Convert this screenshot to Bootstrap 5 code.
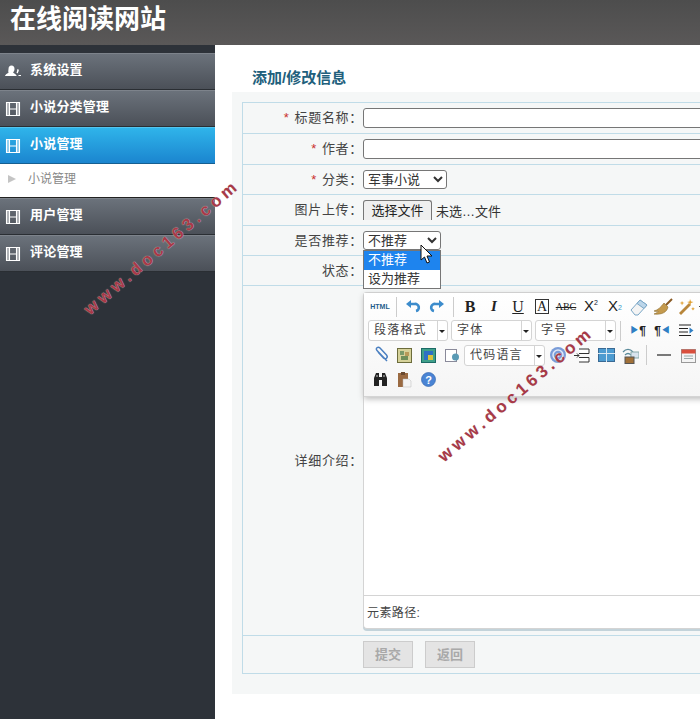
<!DOCTYPE html>
<html lang="zh">
<head>
<meta charset="utf-8">
<title>在线阅读网站</title>
<link href="https://cdn.jsdelivr.net/npm/bootstrap@5.3.0/dist/css/bootstrap.min.css" rel="stylesheet">
<style>
html,body{height:719px;overflow:hidden;background:#fff}
body{font-family:"Liberation Sans","Noto Sans CJK SC",sans-serif;font-size:13px;color:#444;width:700px;position:relative}
.top-bar{height:45px;background:linear-gradient(#4d4d4d,#5a5858);color:#fff;font-size:26px;font-weight:700;line-height:38px;padding-left:10px}
.shell{height:674px}
.side-col{width:215px;flex:none;background:#2d3239;padding-top:8px}
.menu-item{height:37px;background:linear-gradient(#6b727b,#4b5058);border-top:1px solid #7d838b;border-bottom:1px solid #2a2e33;color:#fff;font-weight:700;font-size:13px;letter-spacing:.2px;gap:9px;padding-left:5px}
.menu-item span{margin-bottom:3px}
.menu-item.on{background:linear-gradient(#2fb4ea,#1b85cf);border-top-color:#53c4ee;border-bottom-color:#155f91}
.menu-sub{height:34px;background:#fff;color:#888;font-size:12px;padding:0 0 3px 8px;gap:12px;border-bottom:1px solid #222}
.tri{width:0;height:0;border-left:8px solid #c4c4c4;border-top:4px solid transparent;border-bottom:4px solid transparent}
.main-col{flex:1;min-width:0;overflow:hidden;padding:25px 0 0 17px}
.page-title{color:#21607c;font-size:15px;font-weight:700;height:22px;line-height:16px;padding-left:20px}
.panel-box{background:#f5f7f7;height:602px;padding:10px 0 0 10px;width:520px}
.form-rows{border:1px solid #c0dce8;border-right:0;width:510px}
.form-row-x{border-bottom:1px solid #c0dce8}
.form-row-x:last-child{border-bottom:0}
.lab{width:120px;flex:none;text-align:right;font-size:13px;color:#444;letter-spacing:.7px}
.lab i{color:#c9302c;font-style:normal;margin-right:5px}
.h31{height:31px}.h30{height:30px}
.row-tall{height:350px}.row-btns{height:37px}
.txt{width:400px;height:20px;border:1px solid #767676;border-radius:3px;background:#fff;flex:none}
select.sel{font-size:13px;height:19px;border:1px solid #767676;border-radius:3px;background:#fff;color:#333;padding:0;font-family:inherit}
select.w84{width:84px}select.w78{width:78px}
.file-btn{height:20px;width:69px;padding:0;font-size:13px;border:1px solid #767676;border-bottom:0;border-radius:3px 3px 0 0;background:#efefef;color:#222;flex:none;margin-bottom:5px}
.file-txt{margin:4px 0 0 4px;color:#333;font-size:13px}
.edit-wrap{width:400px;height:337px;flex:none;background:#fff;border:1px solid #d4d4d4;border-right:0;border-radius:4px;box-shadow:0 2px 0 #c3d3da;margin-top:-1px}
.tool-box{height:104px;background:linear-gradient(#fff,#f5f5f5);border-bottom:1px solid #d4d4d4;box-shadow:0 2px 6px #bbb;padding:2px 0 0 4px}
.tool-row{height:24.3px;gap:0;white-space:nowrap}
.ti{width:24px;height:20px;display:inline-flex;align-items:center;justify-content:center;flex:none;font-family:"Liberation Serif",serif;color:#222;font-size:14px;font-weight:700}
.ti-html{font:700 7px "Liberation Sans",sans-serif;color:#1f5d8c}
.ti-b{font-size:16px}.ti-i{font-style:italic;font-size:15px}.ti-u{text-decoration:underline;font-weight:400;font-size:16px}
.ti-a{font-weight:400}.ti-a span{border:1px solid #333;padding:0 1px;line-height:13px;font-size:14px}
.ti-s{font-size:10px;text-decoration:line-through;font-weight:400;margin-right:1px}
.ti-x{font-family:"Liberation Sans",sans-serif;font-size:15px;font-weight:400}
.ti-x sup{font-size:7px;color:#123}.ti-x sub{font-size:7px;color:#39c}
.ti-p{font:700 12px "Liberation Sans",sans-serif;color:#222}.ti-p span{color:#2f7fc4;font-size:9px}
.vbar{width:1px;height:20px;background:#ccc;margin:0 4px;flex:none}
.vbar-b{margin:0 5px 0 2px}.vbar-c{margin:0 5px 0 4px}
.combo{height:21px;width:81px;border:1px solid #d4d4d4;border-radius:3px;background:#fff;font-size:12px;letter-spacing:1.2px;color:#444;padding-left:5px;margin-right:3px;position:relative;flex:none;line-height:19px}
.combo.w80{width:80px}.combo.mr2{margin-right:2px}.combo.mr1{margin-right:1px}
.combo::after{content:"";position:absolute;right:0;top:0;bottom:0;width:10px;border-left:1px solid #d4d4d4}
.combo::before{content:"";position:absolute;right:2px;top:9px;border-top:3px solid #222;border-left:3px solid transparent;border-right:3px solid transparent;z-index:1}
.edit-area{height:198px}
.path-bar{height:33px;border-top:1px solid #d4d4d4;font-size:12px;color:#444;padding:0 0 0 3px;line-height:35px;letter-spacing:.4px}
.grey-btn{width:50px;height:27px;border:1px solid #ccc;background:#e4e4e4;color:#a9a9a9;font-weight:700;font-size:13px;padding:0}
.btn-gap{margin-left:12px}
.drop-list{position:absolute;left:363px;top:250px;width:78px;background:#fff;border:1px solid #767676;font-size:13px;color:#333;line-height:18px;z-index:5}
.drop-opt{padding-left:4px;height:18.5px}
.drop-opt.hl{background:#1e84ee;color:#fff}
.cursor-svg{position:absolute;left:420px;top:244px;z-index:6}
.wm{position:absolute;z-index:9;color:#a83a48;font-weight:700;font-size:17px;letter-spacing:4px;white-space:nowrap;transform-origin:0 0;transform:rotate(-40.500deg);font-family:"Liberation Sans",sans-serif;text-shadow:0 0 1px #ddd;line-height:18px}
.wm1{left:81px;top:305px}
.wm2{left:435px;top:452px}
</style>
</head>
<body>
<div class="top-bar">在线阅读网站</div>
<div class="shell d-flex">
  <div class="side-col">
    <div class="menu-item d-flex align-items-center"><svg width="16" height="16" viewBox="0 0 16 16"><path fill="#fff" d="M6.500 1.500a3 3.500 0 0 1 3 3.500c0 1.600-.7 2.700-1.400 3.200 0 1 3 1.500 3.600 3.800H0c.6-2.300 3.600-2.800 3.600-3.800C2.900 7.700 3.500 6.600 3.500 5a3 3.500 0 0 1 3-3.500z"/><path fill="#fff" d="M12.500 5a1.400 1.600 0 0 1 .6 3c-.4.500.2.900.5 1.100l-1.500.2-.6-.5c.5-.9.600-2.500 1-3.800zM13.500 11H16v1h-2.500z"/></svg><span>系统设置</span></div>
    <div class="menu-item d-flex align-items-center"><svg width="16" height="16" viewBox="0 0 16 16"><use href="#film"/></svg><span>小说分类管理</span></div>
    <div class="menu-item on d-flex align-items-center"><svg width="16" height="16" viewBox="0 0 16 16"><use href="#film"/></svg><span>小说管理</span></div>
    <div class="menu-sub d-flex align-items-center"><span class="tri"></span><span>小说管理</span></div>
    <div class="menu-item d-flex align-items-center"><svg width="16" height="16" viewBox="0 0 16 16"><use href="#film"/></svg><span>用户管理</span></div>
    <div class="menu-item d-flex align-items-center"><svg width="16" height="16" viewBox="0 0 16 16"><use href="#film"/></svg><span>评论管理</span></div>
  </div>
  <div class="main-col">
    <div class="page-title">添加/修改信息</div>
    <div class="panel-box">
      <div class="form-rows">
        <div class="form-row-x h31 d-flex align-items-center"><div class="lab"><i>*</i>标题名称：</div><div class="txt"></div></div>
        <div class="form-row-x h31 d-flex align-items-center"><div class="lab"><i>*</i>作者：</div><div class="txt"></div></div>
        <div class="form-row-x h30 d-flex align-items-center"><div class="lab"><i>*</i>分类：</div><select class="sel w84"><option>军事小说</option></select></div>
        <div class="form-row-x h31 d-flex align-items-end"><div class="lab align-self-center">图片上传：</div><button class="file-btn" type="button">选择文件</button><span class="file-txt align-self-center">未选…文件</span></div>
        <div class="form-row-x h30 d-flex align-items-center"><div class="lab">是否推荐：</div><select class="sel w78"><option>不推荐</option></select></div>
        <div class="form-row-x h30 d-flex align-items-center"><div class="lab">状态：</div></div>
        <div class="form-row-x row-tall d-flex align-items-center"><div class="lab">详细介绍：</div>
          <div class="edit-wrap">
            <div class="tool-box">
              <div class="tool-row d-flex align-items-center">
                <span class="ti ti-html">HTML</span><span class="vbar"></span>
                <span class="ti"><svg width="16" height="16" viewBox="0 0 16 16"><path d="M5 5h4.500a3.500 3.500 0 0 1 1.500 7" fill="none" stroke="#3d8ccc" stroke-width="2.600"/><path d="M1 5l5-4v8z" fill="#3d8ccc"/></svg></span>
                <span class="ti"><svg width="16" height="16" viewBox="0 0 16 16"><path d="M11 5H6.500A3.500 3.500 0 0 0 5 12" fill="none" stroke="#3d8ccc" stroke-width="2.600"/><path d="M15 5l-5-4v8z" fill="#3d8ccc"/></svg></span><span class="vbar"></span>
                <span class="ti ti-b">B</span><span class="ti ti-i">I</span><span class="ti ti-u">U</span>
                <span class="ti ti-a"><span>A</span></span>
                <span class="ti ti-s">ABC</span>
                <span class="ti ti-x">X<sup>2</sup></span>
                <span class="ti ti-x">X<sub>2</sub></span>
                <span class="ti"><svg width="18" height="18" viewBox="0 0 18 18"><path d="M1 12l9-10 7 5-9 10H5z" fill="#f4f4f4" stroke="#7aa7c7"/><path d="M10 2l7 5-3 3.500-7-5z" fill="#bcd6ea" stroke="#7aa7c7"/></svg></span>
                <span class="ti"><svg width="20" height="18" viewBox="0 0 20 18"><path d="M19 1l-6 6" stroke="#8a5a24" stroke-width="2"/><path d="M11 5l4 4c-1 5-6 8-14 7 3-1 4-2 4-3-1 .5-3 .5-4 0 4-1 7-4 10-8z" fill="#c49a4e" stroke="#8a6a2a" stroke-width=".6"/></svg></span>
                <span class="ti"><svg width="18" height="18" viewBox="0 0 18 18"><path d="M2 16L12 6" stroke="#b8863a" stroke-width="2.800"/><path d="M12 1l1 2.500 2.500.5-2.500 1-1 2.500-.5-2.500-2.500-1 2.500-.5zM4 3l.8 1.500L6.500 5l-1.700.6L4 7.500l-.6-1.900L1.500 5l1.900-.5zM15 9l.6 1.200 1.200.6-1.200.6-.6 1.200-.6-1.200-1.200-.6 1.200-.6z" fill="#e0a030"/></svg></span>
                <svg class="flex-shrink-0" width="4" height="3" viewBox="0 0 4 3"><path d="M0 1.500h4" stroke="#444"/></svg>
              </div>
              <div class="tool-row d-flex align-items-center">
                <span class="combo w80">段落格式</span>
                <span class="combo">字体</span>
                <span class="combo mr2">字号</span><span class="vbar vbar-b"></span>
                <span class="ti ti-p"><span>▶</span>¶</span>
                <span class="ti ti-p">¶<span>◀</span></span>
                <span class="ti"><svg width="15" height="13" viewBox="0 0 15 13"><path d="M0 1h12M0 4.500h9M0 8h9M0 11.500h12" stroke="#222"/><path d="M10.500 3.500l4 3-4 3z" fill="#2f7fc4"/></svg></span>
              </div>
              <div class="tool-row d-flex align-items-center">
                <span class="ti"><svg width="17" height="18" viewBox="0 0 17 18"><path d="M15 15L5 4.500C3 2.500 6 0 8 2l6.500 7c2 2.500-1 5-3 3L6 6" fill="none" stroke="#4a7fc0" stroke-width="1.500"/></svg></span>
                <span class="ti"><svg width="15" height="15" viewBox="0 0 15 15"><rect x=".5" y=".5" width="14" height="14" fill="#d6d29a" stroke="#6c6c3c"/><rect x="3" y="3" width="4" height="4" fill="#7a9a6a"/><rect x="8" y="4" width="4" height="4" fill="#b89a5a"/><rect x="4" y="8" width="7" height="4" fill="#6f8f5a"/></svg></span>
                <span class="ti"><svg width="15" height="15" viewBox="0 0 15 15"><rect x=".5" y=".5" width="14" height="14" fill="#3fa08a" stroke="#1c6a66"/><path d="M3 3h9v4H7v5H3z" fill="#2e6fc4"/><path d="M7 7h5v5H7z" fill="#d8c33c"/></svg></span>
                <span class="ti"><svg width="15" height="15" viewBox="0 0 15 15"><rect x=".5" y="1.500" width="11" height="12" fill="#fff" stroke="#8a8a9a"/><circle cx="10.500" cy="9" r="3.500" fill="#5a9ab4"/></svg></span>
                <span class="combo mr1">代码语言</span>
                <span class="ti"><svg width="20" height="18" viewBox="0 0 20 18"><circle cx="10" cy="9" r="8" fill="#7a9cd8"/><circle cx="10" cy="9" r="5" fill="none" stroke="#dfe8f8" stroke-width="1.500"/><circle cx="10" cy="9" r="2" fill="#dfe8f8"/></svg></span>
                <span class="ti"><svg width="16" height="15" viewBox="0 0 16 15"><path d="M5 1h10v4.500H5M5 9.500h10V14H5" fill="#fff" stroke="#333"/><path d="M0 7.500h5M3 5.500l2 2-2 2" stroke="#333" fill="none"/></svg></span>
                <span class="ti"><svg width="17" height="14" viewBox="0 0 17 14"><rect x=".5" y=".5" width="16" height="13" fill="#4d9bd0" stroke="#3a6a94"/><path d="M8.500 0v14M0 5.500h17" stroke="#dbe9f3"/></svg></span>
                <span class="ti"><svg width="18" height="17" viewBox="0 0 18 17"><path d="M2 5c3-3.500 7-3.500 10 0M4 8c2-2 4-2 6 0" fill="none" stroke="#5a8a9a" stroke-width="1.200"/><rect x="10" y="5" width="8" height="6" fill="#d8e4ee" stroke="#8aa"/><rect x="4" y="10" width="9" height="6.500" fill="#a07038" stroke="#555"/></svg></span><span class="vbar vbar-c"></span>
                <span class="ti"><svg width="14" height="4" viewBox="0 0 14 4"><path d="M0 2h14" stroke="#222" stroke-width="1.200"/></svg></span>
                <span class="ti"><svg width="15" height="15" viewBox="0 0 15 15"><rect x=".5" y="1.500" width="14" height="13" fill="#f4f4f4" stroke="#999"/><rect x=".5" y="1.500" width="14" height="4" fill="#d94f3d"/><path d="M3 8h9M3 10.500h9" stroke="#9aa"/></svg></span>
              </div>
              <div class="tool-row d-flex align-items-center">
                <span class="ti"><svg width="15" height="15" viewBox="0 0 15 15"><path d="M1 6l2-5h3v4h3V1h3l2 5v8H9V8H6v6H1z" fill="#222"/><rect x="3" y="3" width="2" height="2" fill="#777"/><rect x="10" y="3" width="2" height="2" fill="#777"/></svg></span>
                <span class="ti"><svg width="15" height="17" viewBox="0 0 15 17"><rect x="1" y="2" width="10" height="14" fill="#9a6a42"/><rect x="4" y="1" width="4" height="3" fill="#6a4a30"/><path d="M6 8h6l2 2v6H6z" fill="#f4f4f4" stroke="#bbb" stroke-width=".5"/></svg></span>
                <span class="ti"><svg width="15" height="15" viewBox="0 0 15 15"><circle cx="7.500" cy="7.500" r="7" fill="#4a84d4" stroke="#3668b0" stroke-width=".7"/><text x="7.500" y="11.500" font-size="11" font-weight="700" text-anchor="middle" fill="#fff" font-family="Liberation Sans">?</text></svg></span>
              </div>
            </div>
            <div class="edit-area"></div>
            <div class="path-bar">元素路径:</div>
          </div>
        </div>
        <div class="form-row-x row-btns d-flex align-items-center"><div class="lab"></div><button class="grey-btn" type="button">提交</button><button class="grey-btn btn-gap" type="button">返回</button></div>
      </div>
    </div>
  </div>
</div>
<div class="drop-list"><div class="drop-opt hl">不推荐</div><div class="drop-opt">设为推荐</div></div>
<svg class="cursor-svg" width="14" height="20" viewBox="0 0 14 20"><path d="M1 1v15l3.500-3 2.500 6 2.500-1-2.500-6H12z" fill="#fff" stroke="#111"/></svg>
<div class="wm wm1">www.doc163.com</div>
<div class="wm wm2">www.doc163.com</div>
<svg width="0" height="0" class="position-absolute"><defs><g id="film"><path fill="none" stroke="#fff" stroke-width="1.100" d="M1.500 1.500h13v13h-13zM4.500 1.500v13M11.500 1.500v13M4.500 8h7"/><path fill="none" stroke="#fff" stroke-width="2" stroke-dasharray="1 1" d="M3 1.500v13M13 1.500v13"/></g></defs></svg>
</body>
</html>
